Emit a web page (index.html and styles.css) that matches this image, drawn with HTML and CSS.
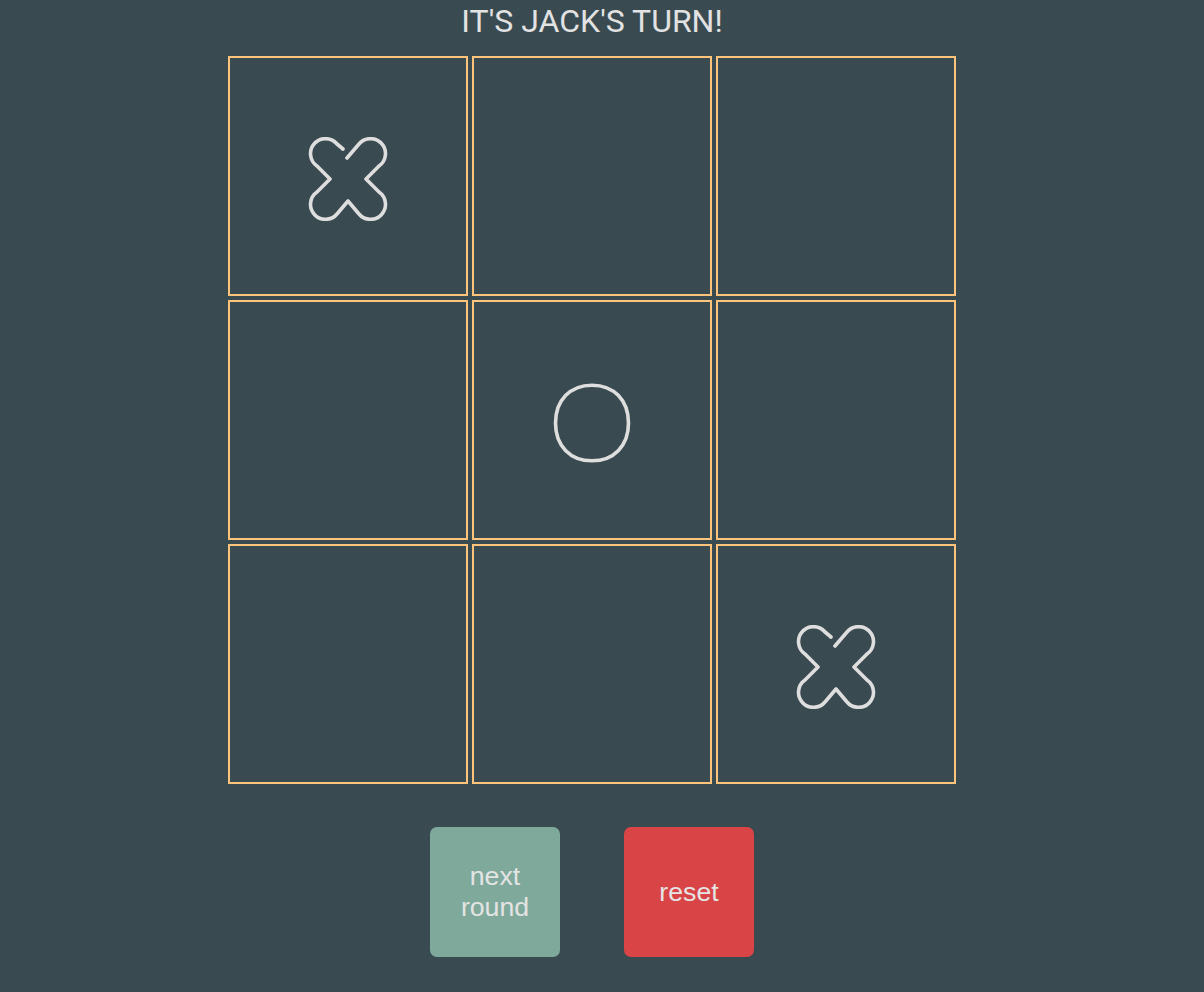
FILE: index.html
```html
<!DOCTYPE html>
<html lang="en">
<head>
<meta charset="utf-8">
<title>Tic Tac Toe</title>
<link rel="stylesheet" href="styles.css">
</head>
<body>
<main class="game">
  <h1 class="status">IT'S JACK'S TURN!</h1>
  <div class="board">
    <div class="cell">
      <svg class="mark mark-x" viewBox="-40 -42 80 84" width="80" height="84" aria-label="X">
        <path d="M -1 -21 L 11 -35 A 15 15 0 1 1 31 -13 L 18 0 L 31 13 A 15 15 0 1 1 11 35 L 0 22 L -11 35 A 15 15 0 1 1 -31 13 L -18 0 L -31 -13 A 15 15 0 1 1 -11 -35 L -5 -30"/>
      </svg>
    </div>
    <div class="cell"></div>
    <div class="cell"></div>
    <div class="cell"></div>
    <div class="cell">
      <svg class="mark mark-o" viewBox="-40 -42 80 84" width="80" height="84" aria-label="O">
        <path d="M 0 -37.8 C 21.9 -37.8 36.5 -22.7 36.5 0 C 36.5 22.7 21.9 37.8 0 37.8 C -21.9 37.8 -36.5 22.7 -36.5 0 C -36.5 -22.7 -21.9 -37.8 0 -37.8 Z"/>
      </svg>
    </div>
    <div class="cell"></div>
    <div class="cell"></div>
    <div class="cell"></div>
    <div class="cell">
      <svg class="mark mark-x" viewBox="-40 -42 80 84" width="80" height="84" aria-label="X">
        <path d="M -1 -21 L 11 -35 A 15 15 0 1 1 31 -13 L 18 0 L 31 13 A 15 15 0 1 1 11 35 L 0 22 L -11 35 A 15 15 0 1 1 -31 13 L -18 0 L -31 -13 A 15 15 0 1 1 -11 -35 L -5 -30"/>
      </svg>
    </div>
  </div>
  <div class="controls">
    <button class="btn btn-next">next<br>round</button>
    <button class="btn btn-reset">reset</button>
  </div>
</main>
</body>
</html>
```

FILE: styles.css
```css
html, body {
  margin: 0;
  padding: 0;
  background: #394a51;
}

.game {
  width: 1184px;
  display: flex;
  flex-direction: column;
  align-items: center;
}

.status {
  margin: 0;
  font-family: Roboto, "Liberation Sans", sans-serif;
  font-weight: 400;
  font-size: 32px;
  line-height: 42px;
  color: #e2e2e2;
}

.board {
  margin-top: 14px;
  display: grid;
  grid-template-columns: repeat(3, 240px);
  grid-auto-rows: 240px;
  gap: 4px;
}

.cell {
  box-sizing: border-box;
  border: 2px solid #fdc57b;
  display: flex;
  align-items: center;
  justify-content: center;
}

.mark {
  display: block;
  margin-top: 6px;
  fill: none;
  stroke: #dedede;
  stroke-width: 3.6;
  stroke-linecap: round;
  stroke-linejoin: round;
}

.controls {
  margin-top: 43px;
  display: flex;
  gap: 64px;
}

.btn {
  width: 130px;
  height: 130px;
  border: none;
  border-radius: 7px;
  font-family: "Liberation Sans", Arial, sans-serif;
  font-size: 26.67px;
  line-height: 31px;
  color: #e4e4e4;
  padding: 0;
  cursor: pointer;
}

.btn-next {
  background: #7fa99b;
}

.btn-reset {
  background: #d94446;
}
```
